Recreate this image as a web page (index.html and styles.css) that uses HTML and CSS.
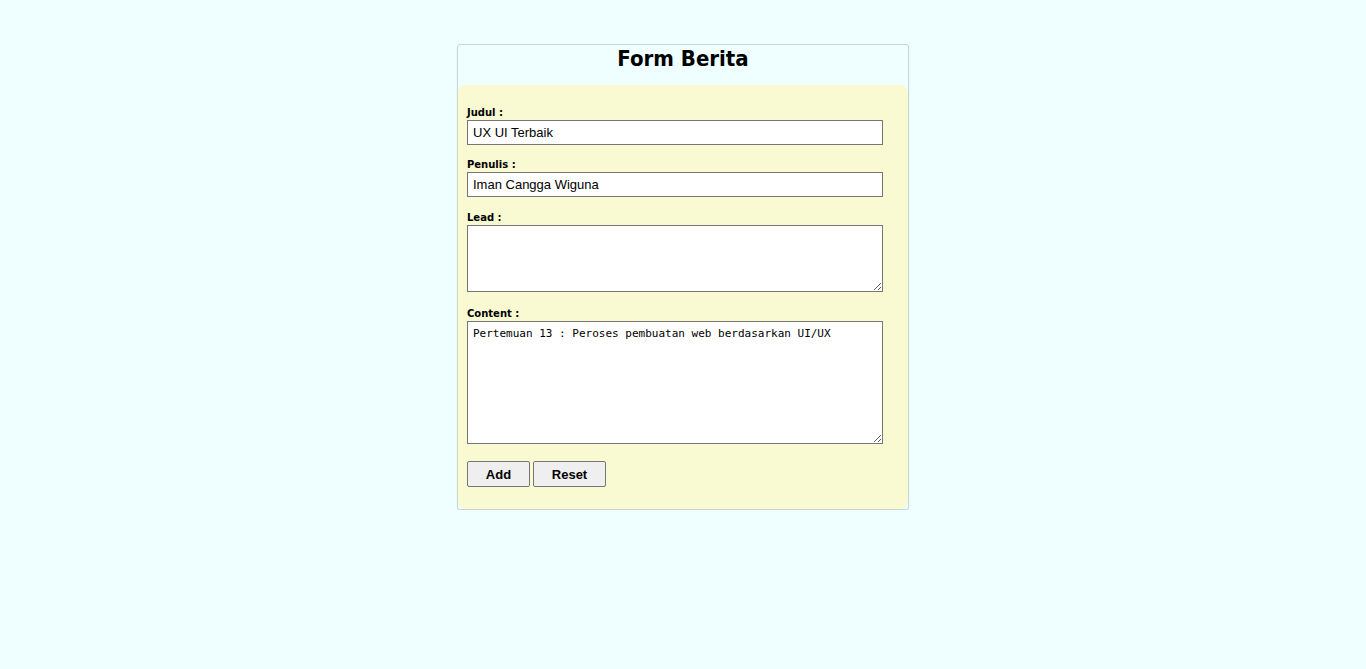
FILE: index.html
```html
<!DOCTYPE html>
<html>
<head>
<meta charset="utf-8">
<title>Form Berita</title>
<link rel="stylesheet" href="styles.css">
</head>
<body>
<div class="card">
  <h1 class="title">Form Berita</h1>
  <form class="form">
    <div class="group">
      <label class="label">Judul :</label>
      <input class="input" type="text" value="UX UI Terbaik">
    </div>
    <div class="group group-before-area">
      <label class="label">Penulis :</label>
      <input class="input" type="text" value="Iman Cangga Wiguna">
    </div>
    <div class="group group-area">
      <label class="label">Lead :</label>
      <textarea class="area lead"></textarea>
    </div>
    <div class="group">
      <label class="label">Content :</label>
      <textarea class="area content">Pertemuan 13 : Peroses pembuatan web berdasarkan UI/UX</textarea>
    </div>
    <div class="buttons">
      <button type="button" class="btn add">Add</button>
      <button type="reset" class="btn reset">Reset</button>
    </div>
  </form>
</div>
</body>
</html>
```
FILE: styles.css
```css
html, body {
  margin: 0;
  padding: 0;
  background: #efffff;
}
body {
  padding-top: 44px;
  font-family: "DejaVu Sans", Verdana, sans-serif;
}
.card {
  width: 450px;
  margin: 0 auto;
  border: 1px solid #c9d6d6;
  border-radius: 3px;
  background: #efffff;
  box-shadow: 0 1px 2px rgba(0,0,0,0.08);
}
.title {
  margin: 0;
  height: 40px;
  padding-top: 1px;
  box-sizing: border-box;
  text-align: center;
  font-family: "DejaVu Sans Condensed", "DejaVu Sans", Tahoma, sans-serif;
  font-stretch: condensed;
  font-weight: bold;
  font-size: 22px;
  line-height: 26px;
  color: #000;
}
.form {
  display: flex;
  flex-direction: column;
  background: #f9f9d2;
  border-radius: 8px;
  padding: 20px 25px 22px 9px;
}
.group {
  display: flex;
  flex-direction: column;
  margin-bottom: 12px;
}
.group-before-area {
  margin-bottom: 13px;
}
.group-area {
  margin-bottom: 14px;
}
.label {
  font-family: "DejaVu Sans", Tahoma, sans-serif;
  font-weight: bold;
  font-size: 10px;
  line-height: 15px;
  color: #000;
  margin-bottom: 0;
}
.input {
  box-sizing: border-box;
  width: 416px;
  height: 25px;
  margin: 0;
  border: 1px solid #767676;
  border-radius: 0;
  padding: 1px 5px;
  font-family: "Liberation Sans", Arial, sans-serif;
  font-size: 13px;
  color: #000;
  background: #fff;
}
.area {
  box-sizing: border-box;
  width: 416px;
  margin: 0;
  border: 1px solid #767676;
  border-radius: 0;
  padding: 5px 5px;
  font-family: "DejaVu Sans Mono", Consolas, monospace;
  font-size: 11px;
  line-height: 13px;
  color: #000;
  background: #fff;
  resize: both;
}
.lead {
  height: 67px;
}
.content {
  height: 123px;
}
.buttons {
  display: flex;
  gap: 3px;
  margin-top: 5px;
}
.btn {
  height: 26px;
  margin: 0;
  border: 1px solid #767676;
  border-radius: 2px;
  background: #efefef;
  font-family: "Liberation Sans", Arial, sans-serif;
  font-weight: bold;
  font-size: 13px;
  color: #000;
  padding: 0;
}
.add {
  width: 63px;
}
.reset {
  width: 73px;
}
```
